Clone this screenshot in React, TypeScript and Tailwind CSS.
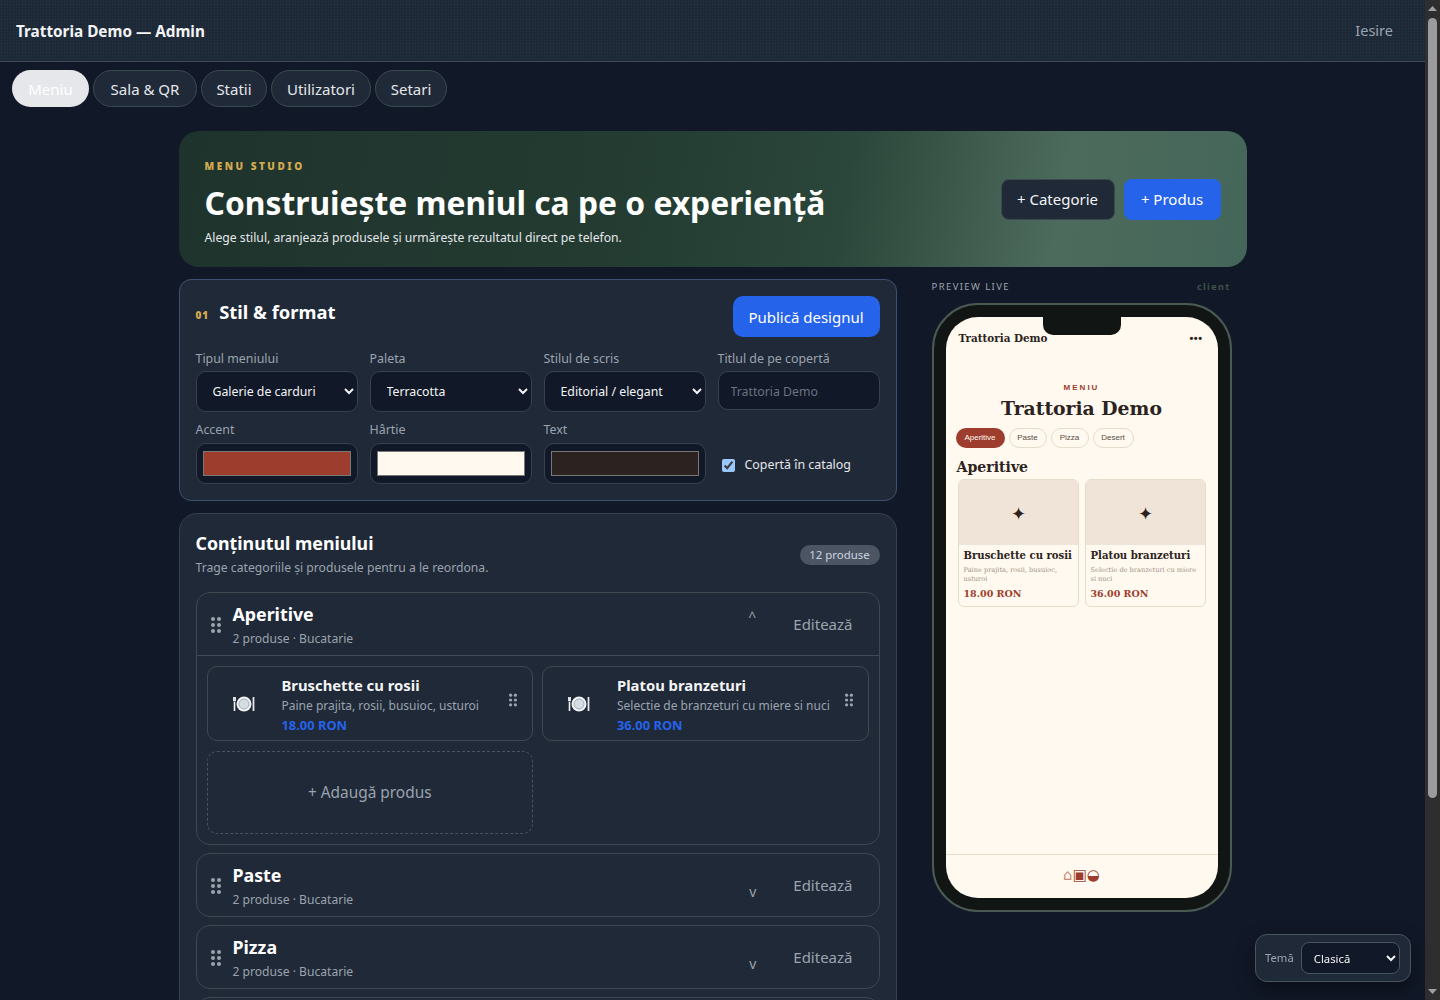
const sans = "font-['Noto_Sans','Open_Sans',sans-serif]";

function Dots({ className = "" }: { className?: string }) {
  return (
    <span className={`grid grid-cols-2 gap-[2px] ${className}`}>
      {[0, 1, 2, 3, 4, 5].map((i) => (
        <i key={i} className="block h-[4px] w-[4px] rounded-full bg-[#9ca3af]" />
      ))}
    </span>
  );
}

function Plate() {
  return (
    <svg width="22" height="16" viewBox="0 0 22 16" className="shrink-0">
      <circle cx="11" cy="8" r="7.5" fill="#f3f4f6" />
      <circle cx="11" cy="8" r="5" fill="#d5dde5" stroke="#a5adb7" strokeWidth="1" />
      <path d="M1.5 6v9" stroke="#f3f4f6" strokeWidth="1.6" />
      <path d="M0.5 1v4M1.5 1v4M2.5 1v4M0.5 5h2" stroke="#f3f4f6" strokeWidth="0.9" />
      <path d="M20.5 1v14" stroke="#e5e7eb" strokeWidth="1.8" />
    </svg>
  );
}

function Field({ label, children }: { label: string; children: React.ReactNode }) {
  return (
    <label className="flex flex-col">
      <span className="mb-[3px] pt-[1px] text-[12.4px] leading-[18px] text-[#9ca3af]">{label}</span>
      {children}
    </label>
  );
}

function Sel({ value }: { value: string }) {
  return (
    <select className="h-[41px] w-full rounded-[10px] border border-[#374151] bg-[#111827] px-[12px] text-[12.3px] text-[#f3f4f6]">
      <option>{value}</option>
    </select>
  );
}

function Color({ value }: { value: string }) {
  return (
    <input
      type="color"
      defaultValue={value}
      className="mt-[1px] h-[41px] w-full rounded-[10px] border border-[#374151] bg-[#111827] px-[4px] py-[3px]"
    />
  );
}

function Cat({ name, open }: { name: string; open?: boolean }) {
  return (
    <div className="rounded-[14px] border border-[#3b4a4f] bg-[#1f2937]">
      <div className={`flex items-center pt-[1px] pl-[14px] pr-[26px] ${open ? "h-[63px] border-b border-[#3f4b5a]" : "h-[62px]"}`}>
        <Dots className="mr-[12px]" />
        <div className="flex-1">
          <div className="text-[17.8px] leading-[24px] font-bold text-white">{name}</div>
          <div className="mt-[4px] text-[12.1px] leading-[18px] text-[#9ca3af]">2 produse · Bucatarie</div>
        </div>
        <span className={`mr-[37px] text-[14px] text-[#9ca3af] ${open ? "-mt-[16px]" : "mt-[12px]"}`}>{open ? "^" : "v"}</span>
        <span className="text-[15px] text-[#9ca3af]">Editează</span>
      </div>
      {open && (
        <div className="grid grid-cols-2 gap-x-[9px] gap-y-[10px] p-[10px]">
          <Prod name="Bruschette cu rosii" desc="Paine prajita, rosii, busuioc, usturoi" price="18.00 RON" />
          <Prod name="Platou branzeturi" desc="Selectie de branzeturi cu miere si nuci" price="36.00 RON" />
          <div className="flex h-[83px] items-center justify-center rounded-[10px] border border-dashed border-[#475563] pt-[1px] text-[15.4px] text-[#9ca3af]">
            + Adaugă produs
          </div>
        </div>
      )}
    </div>
  );
}

function Prod({ name, desc, price }: { name: string; desc: string; price: string }) {
  return (
    <div className="flex h-[75px] items-center rounded-[10px] border border-[#3b4a4f] pl-[25px] pr-[14px]">
      <Plate />
      <div className="ml-[27px] min-w-0 flex-1 pt-[1px]">
        <div className="text-[14.8px] leading-[20px] font-bold text-[#f3f4f6]">{name}</div>
        <div className="mt-[1px] text-[12px] leading-[20px] whitespace-nowrap text-[#9ca3af]">{desc}</div>
        <div className="text-[12.9px] leading-[18px] font-bold text-[#2563eb]">{price}</div>
      </div>
      <Dots className="mb-[8px] scale-[0.8]" />
    </div>
  );
}

function MenuCard({ name, desc, price }: { name: string; desc: string; price: string }) {
  return (
    <div className="h-[128px] flex-1 overflow-hidden rounded-[6px] border border-[#e6dccb]">
      <div className="flex h-[65px] items-center justify-center bg-[#f0e4d8] pt-[1px] text-[18px] text-[#2c2320]">✦</div>
      <div className="px-[5px] pt-[4px]">
        <div className="text-[10.1px] leading-[14px] font-bold whitespace-nowrap text-[#2c2320]">{name}</div>
        <div className="mt-[3px] text-[6.6px] leading-[9px] text-[#a09385]">{desc}</div>
        <div className="mt-[3px] text-[9.5px] leading-[14px] font-bold text-[#9c3d2e]">{price}</div>
      </div>
    </div>
  );
}

const tabs = [
  { t: "Sala & QR", w: "w-[104px]" },
  { t: "Statii", w: "w-[66px]" },
  { t: "Utilizatori", w: "w-[100px]" },
  { t: "Setari", w: "w-[72px]" },
];

export default function App() {
  return (
    <div className={`flex h-screen overflow-hidden bg-[#111827] text-white ${sans}`}>
      <meta name="color-scheme" content="dark" />
      <div className="h-full w-[1425px] shrink-0 overflow-hidden">
        <header className="flex h-[62px] items-center justify-between border-b border-[#3f4b5a] bg-[#1e2937] bg-[radial-gradient(#273547_1px,transparent_1px)] bg-[length:3px_3px] pr-[32px] pl-[16px] pt-[1px]">
          <span className="text-[15.3px] font-bold text-[#f3f4f6]">Trattoria Demo — Admin</span>
          <span className="text-[14.5px] text-[#9ca3af]">Iesire</span>
        </header>
        <nav className="flex gap-[4px] px-[12px] pt-[8px] text-[15px]">
          <span className="flex h-[37px] w-[77px] items-center justify-center rounded-full bg-[#e5e7eb] pt-[1px] text-white">Meniu</span>
          {tabs.map(({ t, w }) => (
            <span key={t} className={`flex h-[37px] items-center justify-center rounded-full border border-[#3b4a4f] bg-[#1f2937] pt-[1px] text-[#e5e7eb] ${w}`}>{t}</span>
          ))}
        </nav>
        <main className="mx-auto w-[1068px] pt-[24px]">
          <section className="flex h-[136px] items-center justify-between rounded-[20px] bg-[linear-gradient(100deg,#1f332d_0%,#233b31_40%,#2b463a_62%,#4d6b5c_82%,#44665a_100%)] px-[26px]">
            <div className="mt-[10px]">
              <div className="mt-[-2px] text-[10px] leading-[14px] font-black tracking-[2.5px] text-[#d4a94e]">MENU STUDIO</div>
              <h1 className="mt-[8px] text-[31.8px] leading-[44px] font-bold text-white">Construiește meniul ca pe o experiență</h1>
              <p className="mt-[4px] text-[12.2px] leading-[18px] text-[#e5e7eb]">Alege stilul, aranjează produsele și urmărește rezultatul direct pe telefon.</p>
            </div>
            <div className="flex gap-[9px] text-[15px]">
              <span className="flex h-[41px] w-[114px] items-center justify-center rounded-[8px] border border-[#3b4a4f] bg-[#1f2937] text-[#f3f4f6]">+ Categorie</span>
              <span className="flex h-[41px] w-[97px] items-center justify-center rounded-[8px] bg-[#2563eb] text-white">+ Produs</span>
            </div>
          </section>
          <div className="mt-[12px] flex items-start gap-[35px]">
            <div className="flex w-[718px] flex-col gap-[12px]">
              <section className="h-[222px] rounded-[12px] border border-[#3d5270] bg-[#1f2937] p-[16px]">
                <div className="flex items-start justify-between">
                  <h2 className="flex items-baseline gap-[10px] pt-[3px] text-[18.4px] leading-[26px] font-bold text-white">
                    <span className="text-[10px] font-black tracking-[1px] text-[#d4a94e]">01</span>Stil &amp; format
                  </h2>
                  <span className="flex h-[41px] w-[147px] items-center justify-center rounded-[10px] bg-[#2563eb] pt-[1px] text-[15px] text-white">Publică designul</span>
                </div>
                <div className="mt-[12px] grid grid-cols-4 gap-x-[12px] gap-y-[8px]">
                  <Field label="Tipul meniului"><Sel value="Galerie de carduri" /></Field>
                  <Field label="Paleta"><Sel value="Terracotta" /></Field>
                  <Field label="Stilul de scris"><Sel value="Editorial / elegant" /></Field>
                  <Field label="Titlul de pe copertă">
                    <input placeholder="Trattoria Demo" className="h-[39px] w-full rounded-[10px] border border-[#374151] bg-[#111827] px-[12px] pt-[2px] text-[12.3px] placeholder:text-[#6b7280]" />
                  </Field>
                  <Field label="Accent"><Color value="#9c3d2e" /></Field>
                  <Field label="Hârtie"><Color value="#fff9ef" /></Field>
                  <Field label="Text"><Color value="#2c2320" /></Field>
                  <label className="flex items-center gap-[10px] pt-[26px] pl-[4px] text-[12.4px] text-[#e5e7eb]">
                    <input type="checkbox" defaultChecked className="h-[13px] w-[13px]" />
                    Copertă în catalog
                  </label>
                </div>
              </section>
              <section className="rounded-[18px] border border-[#374151] bg-[#1f2937] p-[16px]">
                <div className="flex items-center justify-between">
                  <div>
                    <h2 className="text-[17.8px] leading-[27px] font-bold text-white">Conținutul meniului</h2>
                    <p className="mt-[1px] text-[12.2px] leading-[20px] text-[#9ca3af]">Trage categoriile și produsele pentru a le reordona.</p>
                  </div>
                  <span className="mt-[1px] flex h-[20px] w-[80px] items-center justify-center rounded-full bg-[#4b5563] text-[11.4px] text-[#cbd5e1]">12 produse</span>
                </div>
                <div className="mt-[14px] flex flex-col gap-[8px]">
                  <Cat name="Aperitive" open />
                  <Cat name="Paste" />
                  <Cat name="Pizza" />
                  <Cat name="Desert" />
                </div>
              </section>
            </div>
            <aside className="w-[300px]">
              <div className="flex items-center justify-between pt-[2px] pr-[1px] text-[9.5px] leading-[12px] tracking-[1.4px]">
                <span className="text-[#9ca3af]">PREVIEW LIVE</span>
                <span className="text-[9px] font-bold text-[#3f5249]">client</span>
              </div>
              <div className="mt-[10px] h-[609px] w-[300px] rounded-[46px] border-[2px] border-[#4a5a52] bg-[#111614] p-[12px]">
                <div className="relative flex h-full flex-col overflow-hidden rounded-[32px] bg-[#fff9ef] font-['DejaVu_Serif',serif] text-[#2c2320]">
                  <div className="absolute top-0 left-1/2 h-[18px] w-[78px] -translate-x-1/2 rounded-b-[10px] bg-[#111614]" />
                  <div className="flex items-center justify-between pt-[13px] pr-[15px] pl-[13px]">
                    <span className="text-[10.4px] leading-[16px] font-bold">Trattoria Demo</span>
                    <span className="font-['Liberation_Sans',sans-serif] text-[11px] leading-[16px] font-bold tracking-[0.5px]">•••</span>
                  </div>
                  <div className="mt-[36px] text-center font-['Liberation_Sans',sans-serif] text-[8px] leading-[12px] font-bold tracking-[2px] text-[#9c3d2e]">MENIU</div>
                  <div className="mt-[-1px] text-center text-[18.8px] leading-[30px] font-bold">Trattoria Demo</div>
                  <div className="mt-[5px] flex gap-[4px] px-[10px] font-['Liberation_Sans',sans-serif] text-[8px]">
                    <span className="flex h-[20px] w-[49px] items-center justify-center rounded-full bg-[#9c3d2e] text-[#fff9ef]">Aperitive</span>
                    <span className="flex h-[20px] w-[38px] items-center justify-center rounded-full border border-[#e6dccb] text-[#5a4e46]">Paste</span>
                    <span className="flex h-[20px] w-[38px] items-center justify-center rounded-full border border-[#e6dccb] text-[#5a4e46]">Pizza</span>
                    <span className="flex h-[20px] w-[41px] items-center justify-center rounded-full border border-[#e6dccb] text-[#5a4e46]">Desert</span>
                  </div>
                  <div className="mt-[7px] px-[11px] text-[14.1px] leading-[24px] font-bold">Aperitive</div>
                  <div className="flex gap-[6px] px-[12px]">
                    <MenuCard name="Bruschette cu rosii" desc="Paine prajita, rosii, busuioc, usturoi" price="18.00 RON" />
                    <MenuCard name="Platou branzeturi" desc="Selectie de branzeturi cu miere si nuci" price="36.00 RON" />
                  </div>
                  <div className="mt-auto flex h-[44px] items-center justify-center border-t border-[#e6dccb] pb-[2px] font-['DejaVu_Sans',sans-serif] text-[15px] leading-none text-[#9c3d2e]">
                    <span className="text-[#c98a78]">⌂</span>▣◒
                  </div>
                </div>
              </div>
            </aside>
          </div>
        </main>
      </div>
      <div className="relative flex h-full w-[15px] shrink-0 flex-col items-center bg-[#2e2e2e]">
        <svg width="9" height="5" viewBox="0 0 9 5" className="mt-[6px]"><path d="M4.5 0L9 5H0z" fill="#a0a0a0" /></svg>
        <div className="mt-[7px] h-[780px] w-[9px] rounded-full bg-[#9b9b9b]" />
        <svg width="9" height="5" viewBox="0 0 9 5" className="mt-auto mb-[6px]"><path d="M4.5 5L9 0H0z" fill="#a0a0a0" /></svg>
      </div>
      <div className="fixed right-[29px] bottom-[18px] flex h-[48px] w-[156px] items-center gap-[7px] rounded-[12px] border border-[#475563] bg-[#1f2937] pr-[10px] pl-[9px] shadow-[0_8px_20px_rgba(0,0,0,0.4)]">
        <span className="text-[11.3px] text-[#9ca3af]">Temă</span>
        <select className="h-[32px] flex-1 rounded-[8px] border border-[#475563] bg-[#111827] pl-[8px] text-[11.3px] text-[#f3f4f6]">
          <option>Clasică</option>
        </select>
      </div>
    </div>
  );
}
